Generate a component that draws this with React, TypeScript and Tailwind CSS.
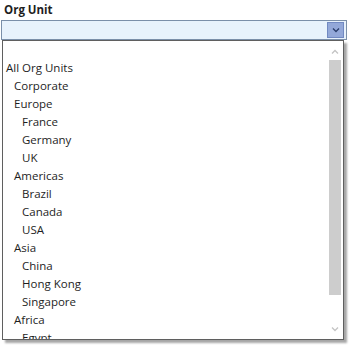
import React from 'react';

type Unit = { name: string; level: number };

const units: Unit[] = [
  { name: '', level: 0 },
  { name: 'All Org Units', level: 0 },
  { name: 'Corporate', level: 1 },
  { name: 'Europe', level: 1 },
  { name: 'France', level: 2 },
  { name: 'Germany', level: 2 },
  { name: 'UK', level: 2 },
  { name: 'Americas', level: 1 },
  { name: 'Brazil', level: 2 },
  { name: 'Canada', level: 2 },
  { name: 'USA', level: 2 },
  { name: 'Asia', level: 1 },
  { name: 'China', level: 2 },
  { name: 'Hong Kong', level: 2 },
  { name: 'Singapore', level: 2 },
  { name: 'Africa', level: 1 },
  { name: 'Egypt', level: 2 },
  { name: 'Kenya', level: 2 },
];

const indent = ['pl-[3px]', 'pl-[11px]', 'pl-[19px]'];

const Chevron: React.FC<{ className?: string; up?: boolean }> = ({ className, up }) => (
  <svg className={className} viewBox="0 0 8 5" fill="none" stroke="currentColor" strokeWidth="1.3">
    <path d={up ? 'M1 4.5 4 1.5 7 4.5' : 'M1 0.5 4 3.5 7 0.5'} />
  </svg>
);

const App: React.FC = () => {
  return (
    <div className="w-[349px] h-[346px] bg-white overflow-hidden text-[11.5px] text-[#1e1e1e] font-['Open_Sans','Segoe_UI',sans-serif]">
      <div className="pl-[4px] pt-[2px] h-[20px] font-bold text-[11.5px] leading-[16px]">Org Unit</div>
      <div className="mx-[1px] w-[346px] h-[20px] border border-[#7b8fa9] bg-[#e8f2fc] flex justify-end items-center pr-[2px]">
        <div className="w-[17px] h-[16px] bg-[#93a8d9] border border-[#7189c2] flex items-center justify-center text-[#2a3d6b]">
          <Chevron className="w-[8px] h-[5px]" />
        </div>
      </div>
      <div className="ml-[2px] w-[342px] h-[300px] border border-[#5f5f5f] bg-white shadow-[3px_3px_2px_rgba(0,0,0,0.35)] flex overflow-hidden">
        <div className="flex-1 overflow-hidden">
          {units.map((u, i) => (
            <div key={i} className={`h-[18px] leading-[18px] whitespace-nowrap ${indent[u.level]}`}>
              {u.name}
            </div>
          ))}
        </div>
        <div className="w-[15px] mr-[1px] flex flex-col items-center">
          <div className="h-[16px] flex items-center justify-center text-[#c4c4c4] mt-[2px]">
            <Chevron className="w-[8px] h-[5px]" up />
          </div>
          <div className="w-[12px] h-[235px] bg-[#cdcdcd] mt-[1px]" />
          <div className="flex-1" />
          <div className="h-[16px] flex items-center justify-center text-[#c4c4c4] mb-[2px]">
            <Chevron className="w-[8px] h-[5px]" />
          </div>
        </div>
      </div>
    </div>
  );
};

export default App;
